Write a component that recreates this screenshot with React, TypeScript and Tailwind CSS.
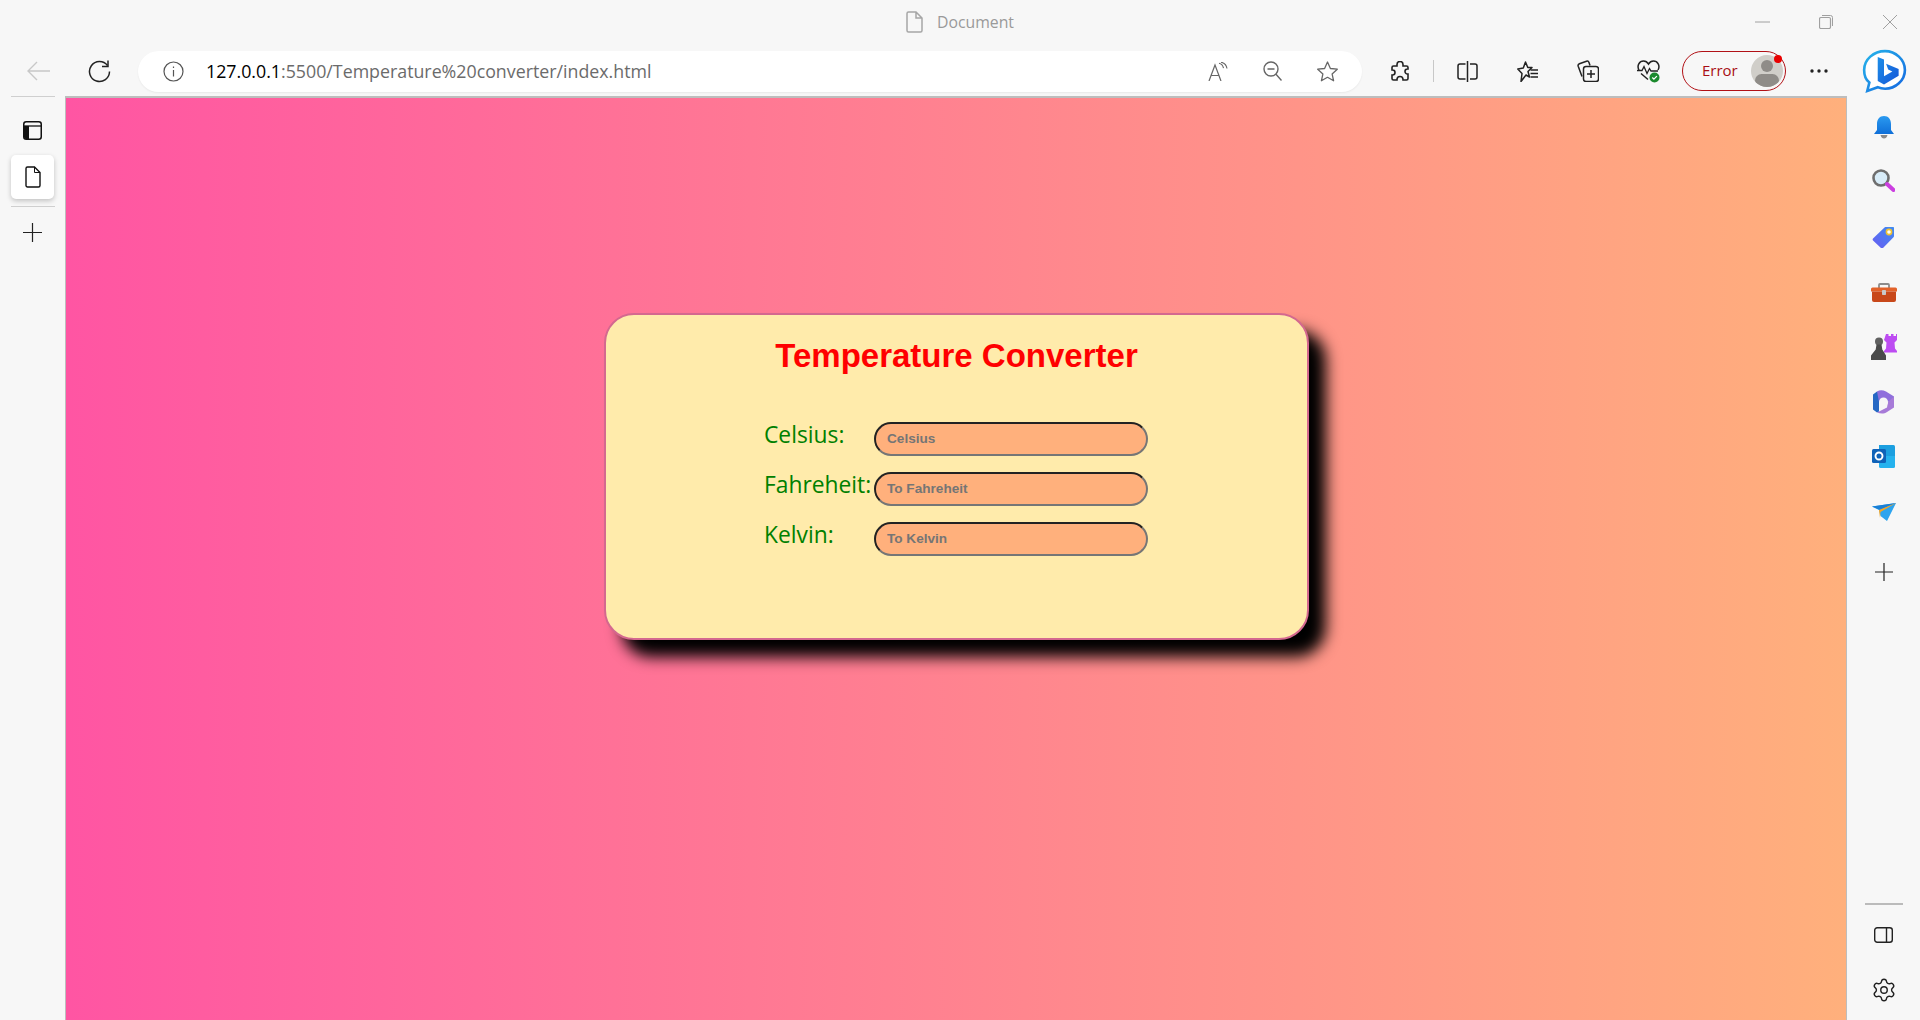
import { Settings } from "lucide-react";

const uiFont = "font-['Open_Sans',sans-serif]";
const starPoints = "10.5,1 13.4,7.5 20.3,8.2 15.1,12.9 16.6,19.8 10.5,16.3 4.4,19.8 5.9,12.9 .7,8.2 7.6,7.5";

function Field({ label, placeholder, className }: { label: string; placeholder: string; className?: string }) {
  return (
    <div className={`flex items-start ${className ?? ""}`}>
      <label className={`w-[110px] text-[22.8px] leading-[26px] text-[#008000] ${uiFont}`}>{label}</label>
      <input
        placeholder={placeholder}
        className="h-[34px] w-[274px] rounded-[17px] border-2 border-t-[#222] border-l-[#222] border-r-[#767676] border-b-[#767676] bg-[#ffb07c] pl-[11px] pb-[1px] font-['Liberation_Sans',sans-serif] text-[13.6px] font-bold placeholder:text-[#757575]"
      />
    </div>
  );
}

function TitleBar() {
  return (
    <div className="flex h-[46px] items-center pb-[2px]">
      <div className="w-[165px]" />
      <div className="flex flex-1 items-center justify-center gap-[14px] text-[#9a9a9a]">
        <svg width="17" height="22" viewBox="0 0 17 22" fill="none" stroke="#a6a6a6" strokeWidth="1.5">
          <path d="M2.5 1H10l6 6v12.5a1.5 1.5 0 0 1-1.5 1.5h-12A1.5 1.5 0 0 1 1 19.5v-17A1.5 1.5 0 0 1 2.5 1ZM10 1v6h6" />
        </svg>
        <span className={`mt-[2px] text-[15.8px] ${uiFont}`}>Document</span>
      </div>
      <div className="flex items-center pr-[23px]">
        <svg width="15" height="2" viewBox="0 0 15 2"><path d="M0 1h15" stroke="#a0a0a0" strokeWidth="1" /></svg>
        <svg width="14" height="14" viewBox="0 0 14 14" fill="none" stroke="#a0a0a0" className="ml-[49px]">
          <rect x=".5" y="2.5" width="11" height="11" rx="1.5" strokeWidth="1.2" />
          <path d="M3 .5h8.5a2 2 0 0 1 2 2V11" strokeWidth="1" />
        </svg>
        <svg width="14" height="14" viewBox="0 0 14 14" className="ml-[50px]"><path d="M0 0l14 14M14 0 0 14" stroke="#a0a0a0" strokeWidth="1" /></svg>
      </div>
    </div>
  );
}

function AddressBar() {
  return (
    <div className="ml-[27px] flex h-[41px] w-[1224px] items-center rounded-[21px] bg-white pr-[24px] shadow-[0_1px_2px_rgba(0,0,0,0.06)]">
      <svg width="21" height="21" viewBox="0 0 21 21" fill="none" stroke="#555" strokeWidth="1.2" className="ml-[25px]">
        <circle cx="10.5" cy="10.5" r="9.5" />
        <path d="M10.5 9v6.5M10.5 5.5v1.5" />
      </svg>
      <span className={`ml-[22px] flex-1 text-[17.8px] text-[#6b6b6b] ${uiFont}`}>
        <span className="text-black">127.0.0.1</span>:5500/Temperature%20converter/index.html
      </span>
      <svg width="20" height="19" viewBox="0 0 20 19" fill="none" stroke="#666" strokeWidth="1.2">
        <path d="M1 19 7 3l6 16M3.2 13.5h7.6" />
        <path d="M11 1.2c2.5.6 4 2.4 4.5 5M13 .2c3.2.6 5.5 3 6 6.3" strokeWidth="1.1" />
      </svg>
      <svg width="19" height="20" viewBox="0 0 19 20" fill="none" stroke="#666" strokeWidth="1.4" className="ml-[35px]">
        <circle cx="8" cy="8" r="7" />
        <path d="M13 13.2 18.5 19.5M4.5 8h7" />
      </svg>
      <svg width="21" height="21" viewBox="0 0 21 21" fill="none" stroke="#666" strokeWidth="1.3" className="ml-[35px]">
        <polygon points={starPoints} strokeLinejoin="round" />
      </svg>
    </div>
  );
}

function Toolbar() {
  return (
    <div className="flex h-[50px] items-center">
      <svg width="23" height="20" viewBox="0 0 23 20" fill="none" stroke="#c8c8c8" strokeWidth="1.4" className="ml-[27px]">
        <path d="M23 10H1.5M10 1 1 10l9 9" />
      </svg>
      <svg width="23" height="23" viewBox="0 0 23 23" fill="none" stroke="#222" strokeWidth="1.5" className="ml-[38px]">
        <path d="M19.5 5.5A10 10 0 1 0 21.5 11.5" />
        <path d="M20 .5v6h-6" />
      </svg>
      <AddressBar />
      <svg width="20" height="21" viewBox="0 0 20 21" fill="none" stroke="#222" strokeWidth="1.6" className="ml-[28px]">
        <path d="M7 3.5a3 3 0 0 1 6 0V5h3.5A1.5 1.5 0 0 1 18 6.5V8h-.5a2.5 2.5 0 0 0 0 5h.5v4.5a1.5 1.5 0 0 1-1.5 1.5H13v-.5a3 3 0 0 0-6 0v.5H3.5A1.5 1.5 0 0 1 2 17.5V14h.5a2.5 2.5 0 0 0 0-5H2V6.5A1.5 1.5 0 0 1 3.5 5H7Z" />
      </svg>
      <div className="ml-[23px] h-[22px] w-px bg-[#c8c8c8]" />
      <svg width="21" height="21" viewBox="0 0 21 21" fill="none" stroke="#222" strokeWidth="1.5" className="ml-[23px]">
        <path d="M8.5 3H3a2 2 0 0 0-2 2v11a2 2 0 0 0 2 2h5.5M10.5 0v21M13 3h5a2 2 0 0 1 2 2v11a2 2 0 0 1-2 2h-5" />
      </svg>
      <svg width="21" height="21" viewBox="0 0 21 21" fill="none" stroke="#222" strokeWidth="1.5" className="ml-[39px]">
        <path d="M8.5 1 10.8 6.5H15L11 10.5 12.5 16 9 14 4 20.5 5 12.5.8 8 6.3 7Z" strokeLinejoin="round" />
        <path d="M13.5 9h7.5M13.5 12.5h7.5M13.5 16h7.5" />
      </svg>
      <svg width="22" height="22" viewBox="0 0 22 22" fill="none" stroke="#222" strokeWidth="1.5" className="ml-[39px]">
        <path d="M5 16.5 1.2 6.3a2 2 0 0 1 1.2-2.5L9.5 1.2A2 2 0 0 1 12 2.4L13 5.5" />
        <rect x="6.5" y="6.5" width="15" height="15" rx="2.5" />
        <path d="M14 10v8M10 14h8" />
      </svg>
      <svg width="23" height="23" viewBox="0 0 23 23" fill="none" className="ml-[38px]">
        <path d="M2 10C-.5 5.5 2.5 1 6.500 1c2 0 3.800 1 5 3 1.200-2 3-3 5-3 4 0 7 4.500 4.500 9M4 13.500l7 6" stroke="#222" strokeWidth="1.5" />
        <path d="M0 10.500h5l2-4 3 7 2.500-5 1.500 2.500h7" stroke="#222" strokeWidth="1.3" />
        <circle cx="17.500" cy="17.500" r="5" fill="#1b8a2d" />
        <path d="m15.300 17.500 1.600 1.600 3-3" stroke="#fff" strokeWidth="1.300" />
      </svg>
      <div className="relative ml-[22px] flex h-[40px] w-[104px] items-center rounded-[20px] border-[1.5px] border-[#b11116]">
        <span className={`ml-[19px] mb-[2px] text-[15px] text-[#a80f14] ${uiFont}`}>Error</span>
        <div className="absolute right-[2px] top-[3px] flex h-[32px] w-[32px] flex-col items-center overflow-hidden rounded-full bg-[#d0cec9]">
          <div className="mt-[5px] h-[12px] w-[12px] rounded-full bg-[#8f8c88]" />
          <div className="mt-[2px] h-[14px] w-[24px] rounded-full bg-[#8f8c88]" />
        </div>
        <div className="absolute right-[3px] top-[3px] h-[8px] w-[8px] rounded-full bg-[#e80000]" />
      </div>
      <svg width="18" height="4" viewBox="0 0 18 4" fill="#222" className="ml-[24px]">
        <circle cx="2" cy="2" r="1.700" />
        <circle cx="9" cy="2" r="1.700" />
        <circle cx="16" cy="2" r="1.700" />
      </svg>
      <svg width="46" height="44" viewBox="0 0 44 42" fill="none" className="ml-[33px]">
        <defs>
          <linearGradient id="bingRing" x1="0" y1="0" x2="1" y2="1">
            <stop offset="0" stopColor="#25b4ea" />
            <stop offset="1" stopColor="#1668e0" />
          </linearGradient>
          <linearGradient id="bingB" x1="0" y1="0" x2="1" y2="1">
            <stop offset="0" stopColor="#1c8fe8" />
            <stop offset="1" stopColor="#1656d8" />
          </linearGradient>
        </defs>
        <path d="M23 2c10 0 19 8 19 18s-9 18-19 18c-3 0-5-.5-7-1.500L6 40l2-8C4 29 3 25 3 20 3 10 12 2 23 2Z" fill="#fff" stroke="url(#bingRing)" strokeWidth="2.500" />
        <path d="M16 7.500 22 10v16l8-4.500-4-2-2-5.500 12 5v6.500L22 34l-6-3.500Z" fill="url(#bingB)" />
      </svg>
    </div>
  );
}

function LeftRail() {
  return (
    <div className="flex w-[65px] flex-col items-center">
      <div className="h-px w-[44px] bg-[#cfcfcf]" />
      <svg width="19" height="19" viewBox="0 0 19 19" fill="none" className="mt-[24px]">
        <rect x=".75" y=".75" width="17.500" height="17.500" rx="2.500" stroke="#111" strokeWidth="1.500" />
        <path d="M1 5h17" stroke="#111" strokeWidth="1.300" />
        <path d="M1 5h5v13H3a2 2 0 0 1-2-2Z" fill="#111" />
      </svg>
      <div className="mt-[15px] flex h-[44px] w-[43px] items-center justify-center rounded-[5px] bg-white shadow-[0_2px_5px_rgba(0,0,0,0.22)]">
        <svg width="16" height="22" viewBox="0 0 16 22" fill="none" stroke="#111" strokeWidth="1.400">
          <path d="M2.500 1H9.500L15 6.500v13a1.500 1.500 0 0 1-1.500 1.500h-11A1.500 1.500 0 0 1 1 19.500v-17A1.500 1.500 0 0 1 2.500 1Z" />
          <path d="M9.500 1v5.500H15" strokeWidth="1" />
        </svg>
      </div>
      <div className="mt-[7px] h-px w-[44px] bg-[#cfcfcf]" />
      <svg width="19" height="19" viewBox="0 0 19 19" stroke="#222" strokeWidth="1.200" className="mt-[16px]"><path d="M9.500 0v19M0 9.500h19" /></svg>
    </div>
  );
}

function RightRail() {
  return (
    <div className="flex w-[73px] flex-col items-center">
      <svg width="20" height="23" viewBox="0 0 20 23" className="mt-[20px]">
        <defs>
          <linearGradient id="bell" x1="0" y1="0" x2="0" y2="1"><stop offset="0" stopColor="#2a9af0" /><stop offset="1" stopColor="#0f6fd8" /></linearGradient>
        </defs>
        <path d="M10 0c4.500 0 7 3.500 7 8v6l3 4H0l3-4V8c0-4.500 2.500-8 7-8Z" fill="url(#bell)" />
        <path d="M6.500 19h7c-.5 2.500-2 3.500-3.500 3.500S7 21.500 6.500 19Z" fill="#8a8a8a" />
      </svg>
      <svg width="23" height="23" viewBox="0 0 23 23" className="mt-[30px]">
        <circle cx="9" cy="9" r="7.500" fill="#d8ecf8" stroke="#6e6e6e" strokeWidth="2.600" />
        <path d="m15 15 6.500 6" stroke="#cb3fe0" strokeWidth="4" strokeLinecap="round" />
      </svg>
      <svg width="23" height="23" viewBox="0 0 23 23" className="mt-[33px]">
        <defs>
          <linearGradient id="tag" x1="0" y1="1" x2="1" y2="0"><stop offset="0" stopColor="#6a5cf2" /><stop offset="1" stopColor="#3f8cf0" /></linearGradient>
        </defs>
        <path d="M1 13.500 12.500 2.500c.5-.5 1-.5 1.500-.5h7c.6 0 1 .4 1 1v8c0 .5-.2 1-.5 1.300L11 23c-.6.5-1.400.5-2 0L1 15.500c-.5-.6-.5-1.400 0-2Z" fill="url(#tag)" />
        <circle cx="17" cy="7" r="2.600" fill="#fff" stroke="#f2c230" strokeWidth="1.600" />
      </svg>
      <svg width="26" height="19" viewBox="0 0 26 19" className="mt-[35px]">
        <path d="M8 5V2a1 1 0 0 1 1-1h8a1 1 0 0 1 1 1v3" fill="none" stroke="#8c8c8c" strokeWidth="1.800" />
        <path d="M0 6a1.500 1.500 0 0 1 1.500-1.500h23A1.500 1.500 0 0 1 26 6v2.500H0Z" fill="#e2622a" />
        <path d="M1 8.500h24V17a2 2 0 0 1-2 2H3a2 2 0 0 1-2-2Z" fill="#c8481a" />
        <rect x="11" y="7" width="4" height="5" rx=".8" fill="#c9c9c9" />
      </svg>
      <svg width="26" height="26" viewBox="0 0 26 26" className="mt-[32px]">
        <path d="M15 0h2.500v2H20V0h2.500v2H25V0h1v6l-2.500 2.500.5 6 2 2.500v1.500H13V17l2-2.500.5-6L13 6Z" fill="#bd4cf2" />
        <circle cx="8" cy="7.500" r="4" fill="#606060" />
        <path d="M5.500 10.500h5l.8 5 3.700 6V26H0v-4.500l4.700-6Z" fill="#4a4a4a" />
      </svg>
      <svg width="23" height="24" viewBox="0 0 23 24" className="mt-[30px]" fill="none">
        <path d="M11.500 5 5 1.500 1 4.500v15l4 3 2-1V9Z" fill="#2668c4" />
        <path d="M5 1.500c3-2 6-1.500 9 0l8 5v3l-6 2.500-4-2.500L7 12Z" fill="#8f6fdc" />
        <path d="M22 6.500v11l-7 4.500c-3 2-6 2-10 .5L15 17.500l1-5.500Z" fill="#a77bd8" />
        <circle cx="11.500" cy="12" r="4.500" fill="#f7f7f7" />
      </svg>
      <svg width="23" height="23" viewBox="0 0 23 23" className="mt-[31px]">
        <path d="M7 0h14.500A1.500 1.500 0 0 1 23 1.500V11H7Z" fill="#1c9fe0" />
        <path d="M7 11h16v10.500a1.500 1.500 0 0 1-1.500 1.500H8.500A1.500 1.500 0 0 1 7 21.500Z" fill="#25b2ee" />
        <rect y="4" width="14" height="14" rx="1.500" fill="#0f62b8" />
        <circle cx="7" cy="11" r="3.500" fill="none" stroke="#fff" strokeWidth="1.900" />
      </svg>
      <svg width="24" height="18" viewBox="0 0 24 18" className="mt-[35px]">
        <path d="M0 3.500 24 0 15 18 8.500 13 7 7Z" fill="#2da4ef" />
        <path d="M0 3.500 8 7 24 0Z" fill="#1a7fd6" />
        <path d="M7 7 24 0 8.500 9 8 15Z" fill="#f5a623" />
      </svg>
      <svg width="18" height="18" viewBox="0 0 18 18" stroke="#222" strokeWidth="1.200" className="mt-[42px]"><path d="M9 0v18M0 9h18" /></svg>
      <div className="mt-auto h-[2px] w-[38px] bg-[#bbb]" />
      <svg width="19" height="16" viewBox="0 0 19 16" fill="none" stroke="#222" strokeWidth="1.400" className="mt-[22px]">
        <rect x=".7" y=".7" width="17.600" height="14.600" rx="2.500" />
        <path d="M12.500 1v14" />
      </svg>
      <Settings size={26} strokeWidth={1.300} className="mb-[17px] mt-[34px] text-[#222]" />
    </div>
  );
}

export default function App() {
  return (
    <div className="flex h-[1020px] w-[1920px] flex-col overflow-hidden bg-[#f7f7f7] font-['Liberation_Sans',sans-serif]">
      <TitleBar />
      <Toolbar />
      <div className="flex min-h-0 flex-1">
        <LeftRail />
        {/* page */}
        <div className="min-w-0 flex-1 border-x border-t-2 border-x-[#bdbdbd] border-t-[#bdbdbd] bg-[linear-gradient(to_right,#ff55a3,#ffb07c)] pl-[538px] pt-[215px]">
          <div className="h-[327px] w-[705px] rounded-[30px] border-2 border-[#d4688f] bg-[#ffebab] pt-[22px] shadow-[17px_17px_15px_#000]">
            <h1 className="text-center text-[33px] font-bold leading-[37px] text-[#ff0000]">Temperature Converter</h1>
            <div className="ml-[158px] mt-[48px]">
              <Field label="Celsius:" placeholder="Celsius" />
              <Field label="Fahreheit:" placeholder="To Fahreheit" className="mt-[16px]" />
              <Field label="Kelvin:" placeholder="To Kelvin" className="mt-[16px]" />
            </div>
          </div>
        </div>
        <RightRail />
      </div>
    </div>
  );
}
